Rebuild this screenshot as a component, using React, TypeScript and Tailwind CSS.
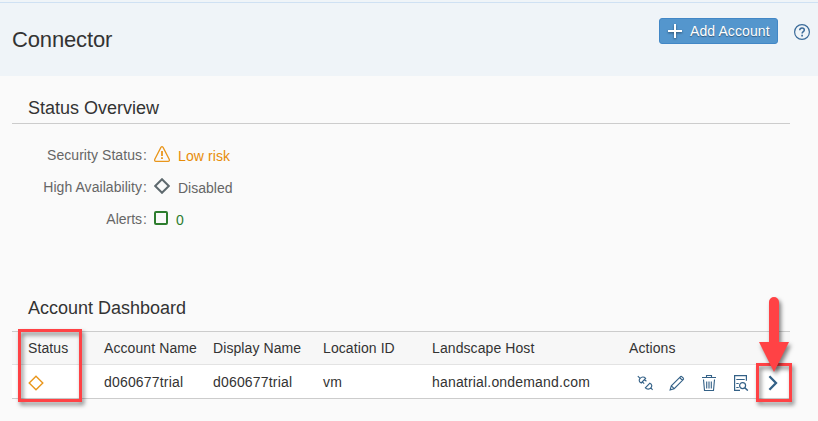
import React from "react";

const columns = "grid grid-cols-[76px_109px_110px_109px_197px_1fr] items-center pl-4";

function Plus() {
  return (
    <svg width="14" height="14" viewBox="0 0 14 14" className="shrink-0 drop-shadow-[0_1px_1px_rgba(0,0,0,0.45)]">
      <path d="M7 0v14M0 7h14" stroke="#fff" strokeWidth="2" />
    </svg>
  );
}

function Help() {
  return (
    <svg width="16" height="16" viewBox="0 0 16 16" fill="none" stroke="#3a6a99" className="shrink-0">
      <circle cx="8" cy="8" r="7.4" strokeWidth="1.2" />
      <path d="M5.7 6.2C5.7 4.6 6.7 3.9 8 3.9s2.3.8 2.3 2c0 1.8-2.2 1.7-2.2 3.7" strokeWidth="1.5" />
      <path d="M8.1 10.8v1.7" strokeWidth="1.7" />
    </svg>
  );
}

function Warning() {
  return (
    <svg width="16" height="16" viewBox="0 0 16 16" fill="none" stroke="#e9961c" className="relative -top-px shrink-0">
      <path d="M6.9 1.4Q8 0 9.1 1.4L15.2 13.3Q15.8 15.2 14.2 15.3H1.8Q.2 15.2.8 13.3Z" strokeWidth="1.3" />
      <path d="M8 5v5M8 11.2v1.9" strokeWidth="1.8" />
    </svg>
  );
}

function Diamond({ color, width }: { color: string; width: number }) {
  return (
    <svg width="16" height="16" viewBox="0 0 16 16" fill="none" className="relative -top-px shrink-0">
      <path d="M8 1.2 14.8 8 8 14.8 1.2 8Z" stroke={color} strokeWidth={width} />
    </svg>
  );
}

function Square() {
  return (
    <svg width="14" height="14" viewBox="0 0 14 14" fill="none" className="relative -top-px shrink-0">
      <rect x="1" y="1" width="12" height="12" rx="1" stroke="#2d7d2e" strokeWidth="2" />
    </svg>
  );
}

function Plug() {
  return (
    <svg width="16" height="16" viewBox="0 0 16 16" fill="none" stroke="#346187" strokeWidth="1.15">
      <path d="M.8 1.2 3.1 3.3M8.6 3.3 4.2 8C2 7.2 1.6 5 3.1 3.3 4.6 1.7 7 1.5 8.6 3.3ZM7.6 4.6 9.4 6.2M5.4 7 7.2 8.6" />
      <path d="M12.9 8.2C15 9 15.3 11.4 13.9 12.9 12.3 14.6 9.8 14.4 8.4 12.8ZM13.9 12.9 15.6 14.8" />
    </svg>
  );
}

function Pencil() {
  return (
    <svg width="16" height="16" viewBox="0 0 16 16" fill="none" stroke="#346187" strokeWidth="1.1">
      <path d="M1.1 14.9 2.3 10.8 11.3 1.8Q12.1 1 13 1.8L14.2 3Q15 3.9 14.2 4.7L5.2 13.7ZM10.6 2.5 13.5 5.4M2.3 10.8 5.2 13.7" />
    </svg>
  );
}

function Trash() {
  return (
    <svg width="16" height="16" viewBox="0 0 16 16" fill="none" stroke="#346187">
      <path d="M1 2.5h14M5.5 2V.5h5V2" strokeWidth="1.1" />
      <path d="M2.5 4.5 3.5 15.5h9L13.5 4.5M5.7 6.5v7M8 6.5v7M10.3 6.5v7" strokeWidth="1.1" />
    </svg>
  );
}

function Inspect() {
  return (
    <svg width="16" height="16" viewBox="0 0 16 16" fill="none" stroke="#346187" strokeWidth="1.2">
      <path d="M7 15.4H1.6V.6h11.8v5.2M3.3 4.5h8.4M3.3 8.5h2.4M3.3 12.5h2.4" />
      <circle cx="9.6" cy="10.6" r="3" />
      <path d="m11.8 12.8 3 2.8" strokeWidth="1.5" />
    </svg>
  );
}

function Chevron() {
  return (
    <svg width="16" height="16" viewBox="0 0 16 16" fill="none">
      <path d="M4.4 1.2 11 8 4.4 14.8" stroke="#346187" strokeWidth="2.3" />
    </svg>
  );
}

export default function App() {
  return (
    <main className="relative h-[421px] w-[818px] overflow-hidden bg-[#fafafa] font-['Liberation_Sans',Arial,sans-serif] text-sm text-[#333]">
      <header className="flex h-[76px] flex-col bg-[#eff4f8]">
        <div className="h-[3px] shrink-0 border-b border-[#cfe1f3]" />
        <div className="flex flex-1 items-start justify-between pl-3 pr-2">
          <h1 className="mt-[21px] text-[22px] leading-8 tracking-[-0.15px]">Connector</h1>
          <div className="mt-[15px] flex items-center gap-4">
            <button className="flex h-[26px] w-[119px] items-center gap-2 rounded-[3px] border border-[#4287c6] bg-[#5496cd] pl-2 text-white">
              <Plus />
              <span className="whitespace-nowrap tracking-[0.1px] [text-shadow:0_1px_1px_rgba(0,0,0,0.4)]">Add Account</span>
            </button>
            <span className="pt-0.5"><Help /></span>
          </div>
        </div>
      </header>

      <section className="ml-3 w-[778px]">
        <h2 className="h-12 border-b border-[#cccccc] pl-4 pt-5 text-lg leading-6">Status Overview</h2>
        <dl className="mt-[15px] text-[#666]">
          <div className="flex h-8 items-center">
            <dt className="w-[135px] text-right tracking-[0.06px]">Security Status<span className="ml-px">:</span></dt>
            <dd className="flex items-center gap-2 pl-[7px] text-[#e78c07]"><Warning /><span className="pt-px tracking-[0.1px]">Low risk</span></dd>
          </div>
          <div className="flex h-8 items-center">
            <dt className="w-[135px] text-right tracking-[0.06px]">High Availability<span className="ml-px">:</span></dt>
            <dd className="flex items-center gap-2 pl-[7px]"><Diamond color="#5e696e" width={2} /><span className="pt-px">Disabled</span></dd>
          </div>
          <div className="flex h-8 items-center">
            <dt className="w-[135px] text-right">Alerts<span className="ml-px">:</span></dt>
            <dd className="flex items-center gap-2 pl-[7px] text-[#2d7d2e]"><Square /><span className="pt-px">0</span></dd>
          </div>
        </dl>
      </section>

      <section className="ml-3 mt-[60px] w-[778px]">
        <h2 className="h-[36px] pl-4 pt-px text-lg leading-6">Account Dashboard</h2>
        <div className="border-y border-[#cccccc] bg-white">
          <div className={`${columns} h-8 bg-[#f7f7f7] tracking-[0.09px]`}>
            <span>Status</span><span>Account Name</span><span>Display Name</span><span>Location ID</span><span>Landscape Host</span><span>Actions</span>
          </div>
          <div className={`${columns} h-[34px] border-t border-[#e3e3e3] tracking-[0.18px]`}>
            <span className="pt-1"><Diamond color="#e9961c" width={1.4} /></span>
            <span>d060677trial</span><span>d060677trial</span><span>vm</span><span>hanatrial.ondemand.com</span>
            <div className="flex gap-4 pl-2 pt-0.5"><Plug /><Pencil /><Trash /><Inspect /><Chevron /></div>
          </div>
        </div>
      </section>

      <div className="absolute left-[18px] top-[329px] h-[73px] w-16 border-[3px] border-[#ff4245] drop-shadow-[2px_3px_2px_rgba(0,0,0,0.5)]" />
      <div className="absolute left-[756px] top-[363px] h-[39px] w-9 border-[3px] border-[#ff4245] drop-shadow-[2px_3px_2px_rgba(0,0,0,0.5)]" />
      <svg className="absolute left-[759px] top-[297px] drop-shadow-[2px_3px_2px_rgba(0,0,0,0.5)]" width="30" height="76" viewBox="0 0 30 76">
        <path d="M10 5a5 5 0 0 1 10 0v40h10L15 75 0 45h10Z" fill="#ff4245" />
      </svg>
    </main>
  );
}
